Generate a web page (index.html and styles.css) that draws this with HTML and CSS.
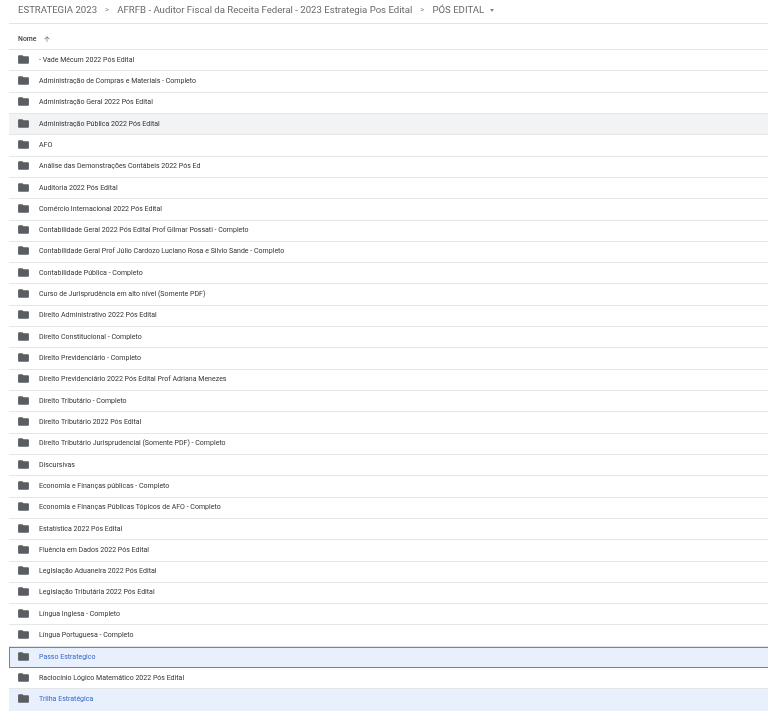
FILE: index.html
```html
<!DOCTYPE html>
<html lang="pt-BR">
<head>
  <meta charset="UTF-8" />
  <title>PÓS EDITAL</title>
  <link rel="stylesheet" href="styles.css">
</head>
<body>
  <svg class="defs" width="0" height="0">
    <symbol id="folder" viewBox="0 0 24 24">
      <path d="M10 4H4c-1.1 0-2 .9-2 2v12c0 1.1.9 2 2 2h16c1.1 0 2-.9 2-2V8c0-1.1-.9-2-2-2h-8l-2-2z"/>
    </symbol>
  </svg>

  <div class="drive">
    <div class="crumbs">
      <span>ESTRATEGIA 2023</span>
      <span class="sep">&gt;</span>
      <span>AFRFB - Auditor Fiscal da Receita Federal - 2023 Estrategia Pos Edital</span>
      <span class="sep">&gt;</span>
      <span>PÓS EDITAL</span>
      <span class="caret"></span>
    </div>

    <div class="head">
      <span>Nome</span>
      <svg class="arrow" viewBox="0 0 24 24"><path d="M4 12l1.4 1.4L11 7.8V20h2V7.8l5.6 5.6L20 12l-8-8z"/></svg>
    </div>

    <div class="list" id="list"></div>
  </div>

  <script>
    const folders = [
      "- Vade Mécum 2022 Pós Edital",
      "Administração de Compras e Materiais - Completo",
      "Administração Geral 2022 Pós Edital",
      "Administração Pública 2022 Pós Edital",
      "AFO",
      "Análise das Demonstrações Contábeis 2022 Pós Ed",
      "Auditoria 2022 Pós Edital",
      "Comércio Internacional 2022 Pós Edital",
      "Contabilidade Geral 2022 Pós Edital Prof Gilmar Possati - Completo",
      "Contabilidade Geral Prof Júlio Cardozo Luciano Rosa e Silvio Sande - Completo",
      "Contabilidade Pública - Completo",
      "Curso de Jurisprudência em alto nível (Somente PDF)",
      "Direito Administrativo 2022 Pós Edital",
      "Direito Constitucional - Completo",
      "Direito Previdenciário - Completo",
      "Direito Previdenciário 2022 Pós Edital Prof Adriana Menezes",
      "Direito Tributário - Completo",
      "Direito Tributário 2022 Pós Edital",
      "Direito Tributário Jurisprudencial (Somente PDF) - Completo",
      "Discursivas",
      "Economia e Finanças públicas - Completo",
      "Economia e Finanças Públicas Tópicos de AFO - Completo",
      "Estatística 2022 Pós Edital",
      "Fluência em Dados 2022 Pós Edital",
      "Legislação Aduaneira 2022 Pós Edital",
      "Legislação Tributária 2022 Pós Edital",
      "Língua Inglesa - Completo",
      "Língua Portuguesa - Completo",
      "Passo Estrategico",
      "Raciocínio Lógico Matemático 2022 Pós Edital",
      "Trilha Estratégica"
    ];
    const rowClass = {
      "Administração Pública 2022 Pós Edital": "hover",
      "Passo Estrategico": "selected focused",
      "Trilha Estratégica": "selected"
    };

    const list = document.getElementById("list");
    folders.forEach(name => {
      const row = document.createElement("div");
      row.className = "row " + (rowClass[name] || "");
      row.innerHTML = `<svg class="folder"><use href="#folder"/></svg><span></span>`;
      row.querySelector("span").textContent = name;
      list.appendChild(row);
    });
  </script>
</body>
</html>
```

FILE: styles.css
```css
body {
  margin: 0;
  background: #fff;
  font-family: Roboto, "Liberation Sans", sans-serif;
  color: #3c4043;
}

.defs {
  position: absolute;
}

.drive {
  padding-left: 9px;
  filter: blur(0.4px);
}

.crumbs {
  display: flex;
  align-items: center;
  height: 24px;
  padding-left: 9px;
  padding-bottom: 4px;
  box-sizing: border-box;
  font-size: 9.6px;
  color: #66696d;
  border-bottom: 1px solid #e3e4e5;
}

.sep {
  margin: 0 8px;
  font-size: 8px;
  color: #8a8d90;
}

.caret {
  margin-left: 6px;
  margin-top: 1px;
  border-left: 2.5px solid transparent;
  border-right: 2.5px solid transparent;
  border-top: 3px solid #85888b;
}

.head {
  display: flex;
  align-items: center;
  gap: 6px;
  height: 26px;
  padding: 5px 0 0 9px;
  box-sizing: border-box;
  font-size: 6.9px;
  font-weight: 500;
  color: #3c4043;
  border-bottom: 1px solid #e3e4e5;
}

.arrow {
  width: 8px;
  height: 8px;
  fill: #6a6e72;
}

.row {
  display: flex;
  align-items: center;
  height: 21.32px;
  padding: 0 0 2px 8px;
  box-sizing: border-box;
  font-size: 7.03px;
  color: #303336;
  border-bottom: 1px solid #e5e6e7;
}

.folder {
  width: 13px;
  height: 13px;
  margin-right: 9px;
  fill: #5a5d61;
  flex: none;
}

.row.hover {
  background: #f1f3f4;
}

.row.selected {
  background: #e8f0fe;
  color: #3567c6;
  border-bottom-color: #e8f0fe;
}

.row.focused {
  border: 1px solid #5b86cf;
  border-right: 0;
  padding-left: 7px;
}
```
